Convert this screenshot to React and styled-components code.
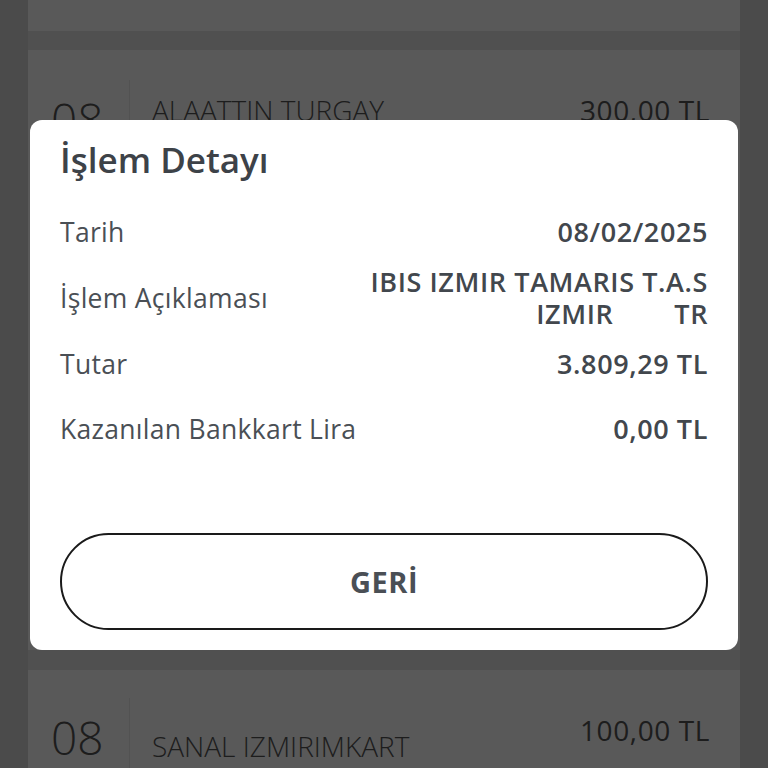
import styled, { createGlobalStyle } from "styled-components";

const GlobalStyle = createGlobalStyle`
  html, body {
    margin: 0;
    padding: 0;
    height: 100%;
  }
  body {
    font-family: "Open Sans", "Noto Sans", sans-serif;
    background: #d6d6d6;
    overflow: hidden;
  }
`;

const Page = styled.div`
  width: 768px;
  height: 768px;
  display: flex;
  justify-content: center;
  background: #d6d6d6;
  overflow: hidden;
`;

const Column = styled.div`
  width: 712px;
  display: flex;
  flex-direction: column;
  background: #ffffff;
`;

const CardTop = styled.div`
  height: 31px;
  flex-shrink: 0;
  background: #ffffff;
`;

const Band = styled.div`
  height: ${(p) => p.h || 19}px;
  flex-shrink: 0;
  background: #e6e6e6;
`;

const Spacer = styled.div`
  flex: 1;
  background: #ffffff;
`;

const TxCard = styled.div`
  display: flex;
  flex-shrink: 0;
  padding-top: ${(p) => p.top}px;
  height: ${(p) => p.h}px;
  box-sizing: border-box;
  background: #ffffff;
`;

const Day = styled.div`
  width: 102px;
  padding-left: 23px;
  box-sizing: border-box;
  font-size: 46px;
  font-weight: 300;
  color: #555;
  line-height: 1;
  border-right: 1px solid #ececec;
  margin-top: -16px;
  padding-top: 16px;
`;

const Merchant = styled.div`
  flex: 1;
  padding-left: 22px;
  padding-top: ${(p) => p.drop || 0}px;
  font-size: 28px;
  font-weight: 300;
  color: #555;
  line-height: 1;
`;

const Amount = styled.div`
  padding-right: 30px;
  padding-top: ${(p) => p.drop || 0}px;
  font-size: 28px;
  font-weight: ${(p) => p.weight || 500};
  letter-spacing: 0.6px;
  color: #555;
  line-height: 1;
`;

const Overlay = styled.div`
  position: fixed;
  inset: 0;
  background: rgba(0, 0, 0, 0.65);
`;

const Modal = styled.div`
  position: fixed;
  left: 30px;
  top: 120px;
  width: 708px;
  height: 530px;
  box-sizing: border-box;
  background: #fff;
  border-radius: 12px;
  padding: 20px 30px 20px 30px;
  display: flex;
  flex-direction: column;
  color: #42474d;
`;

const Title = styled.h2`
  margin: 0 0 19px;
  font-size: 35px;
  font-weight: 600;
  line-height: 40px;
  color: #3d4248;
`;

const Rows = styled.div`
  display: flex;
  flex-direction: column;
`;

const Row = styled.div`
  display: flex;
  justify-content: space-between;
  align-items: center;
  min-height: ${(p) => p.h || 65}px;
`;

const Label = styled.span`
  font-size: 26.5px;
  letter-spacing: 0.3px;
  color: #4a4f55;
`;

const Value = styled.span`
  font-size: 27px;
  font-weight: 600;
  letter-spacing: 0.6px;
  color: #42474d;
  text-align: right;
  line-height: 32px;
  white-space: pre;
`;

const BackButton = styled.button`
  margin-top: auto;
  height: 97px;
  border: 2px solid #1a1a1a;
  border-radius: 50px;
  background: #fff;
  font-family: inherit;
  font-size: 29px;
  font-weight: 700;
  letter-spacing: 0.5px;
  color: #4a4f55;
  cursor: pointer;
`;

const details = [
  { label: "Tarih", value: "08/02/2025" },
  { label: "İşlem Açıklaması", value: "IBIS IZMIR TAMARIS T.A.S\nIZMIR        TR", h: 67 },
  { label: "Tutar", value: "3.809,29 TL" },
  { label: "Kazanılan Bankkart Lira", value: "0,00 TL" },
];

export default function App() {
  return (
    <>
      <GlobalStyle />
      <Page>
        <Column>
          <CardTop />
          <Band />
          <TxCard h={100} top={46}>
            <Day>08</Day>
            <Merchant>ALAATTIN TURGAY</Merchant>
            <Amount weight={400}>300,00 TL</Amount>
          </TxCard>
          <Spacer />
          <Band h={20} />
          <TxCard h={98} top={44}>
            <Day>08</Day>
            <Merchant drop={18}>SANAL IZMIRIMKART</Merchant>
            <Amount drop={2}>100,00 TL</Amount>
          </TxCard>
        </Column>
      </Page>
      <Overlay />
      <Modal>
        <Title>İşlem Detayı</Title>
        <Rows>
          {details.map((d) => (
            <Row key={d.label} h={d.h}>
              <Label>{d.label}</Label>
              <Value>{d.value}</Value>
            </Row>
          ))}
        </Rows>
        <BackButton>GERİ</BackButton>
      </Modal>
    </>
  );
}
